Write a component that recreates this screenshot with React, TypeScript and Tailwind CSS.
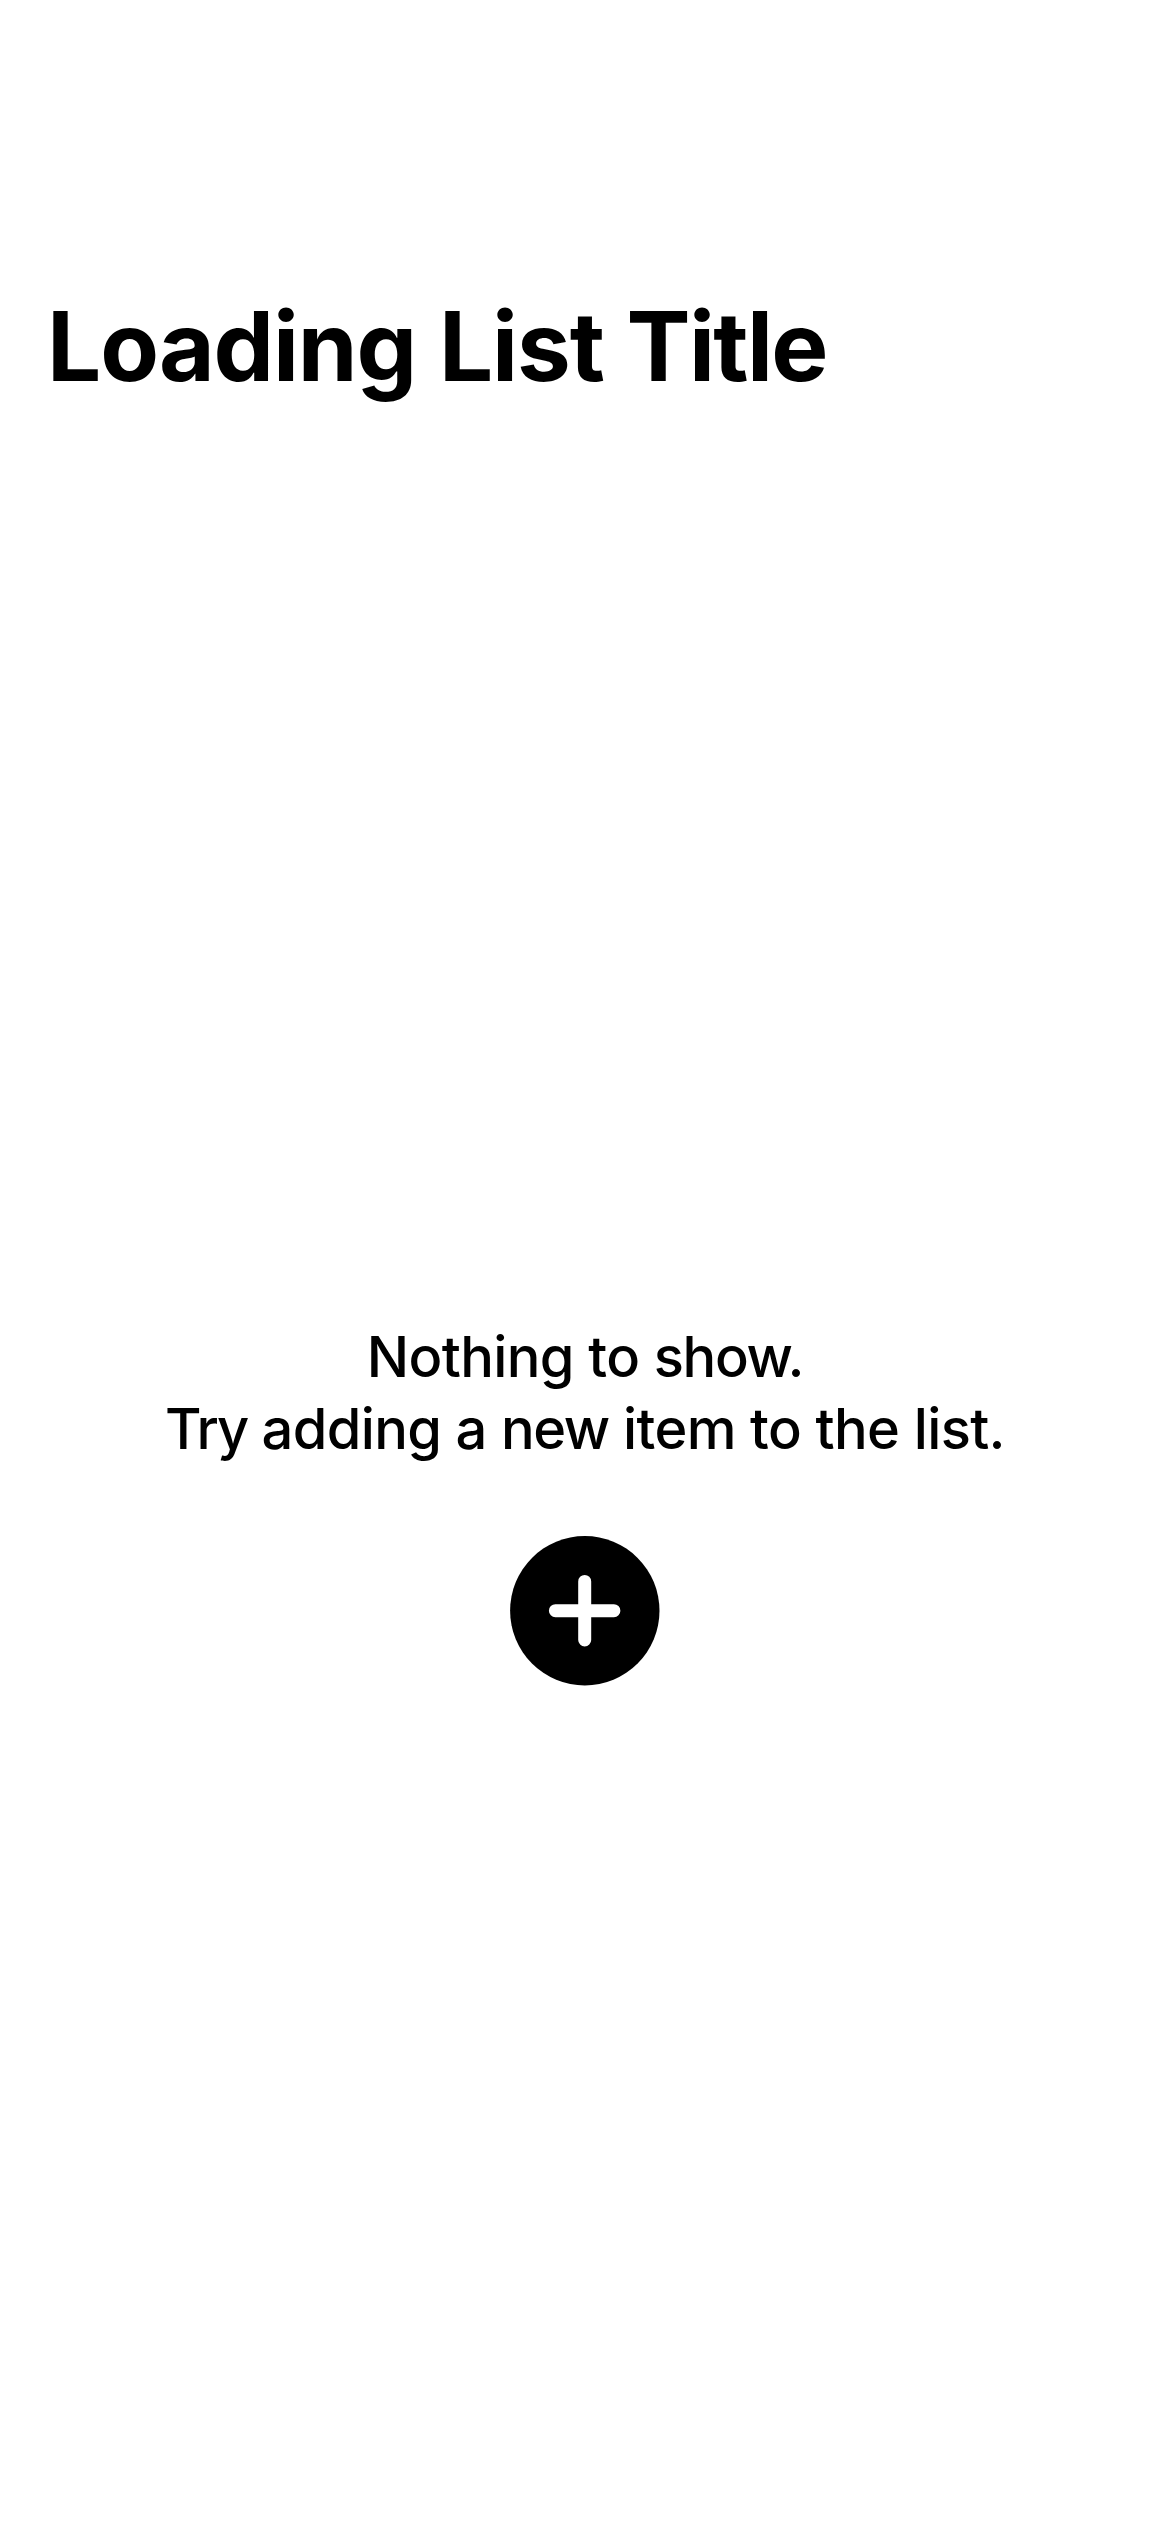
export default function App() {
  return (
    <main className="flex h-[2532px] w-full flex-col bg-white font-['Inter',sans-serif] text-black">
      <h1 className="mt-[285px] ml-[47px] h-[122px] text-[96px] leading-[122px] font-bold tracking-[-1.1px] [word-spacing:1.2px] whitespace-nowrap">
        Loading List <span className="tracking-[-1.7px]">Title</span>
      </h1>
      <section className="mt-[914px] flex flex-col items-center">
        <p className="text-center text-[56px] leading-[72px] font-medium tracking-[-0.62px] whitespace-nowrap">
          Nothing to <span className="tracking-[-1.3px]">show.</span>
          <br />
          <span className="tracking-[-2px]">Try</span> adding a{" "}
          <span className="tracking-[-1.5px]">new</span> item to the list.
        </p>
        <button aria-label="Add item" className="mt-[71px]">
          <svg width="150" height="150" viewBox="0 0 150 150">
            <circle cx="74.8" cy="74.7" r="74.7" fill="black" />
            <path
              d="M74.7 45.4V103.9M45.4 74.7H103.9"
              stroke="white"
              strokeWidth="13"
              strokeLinecap="round"
            />
          </svg>
        </button>
      </section>
    </main>
  );
}
